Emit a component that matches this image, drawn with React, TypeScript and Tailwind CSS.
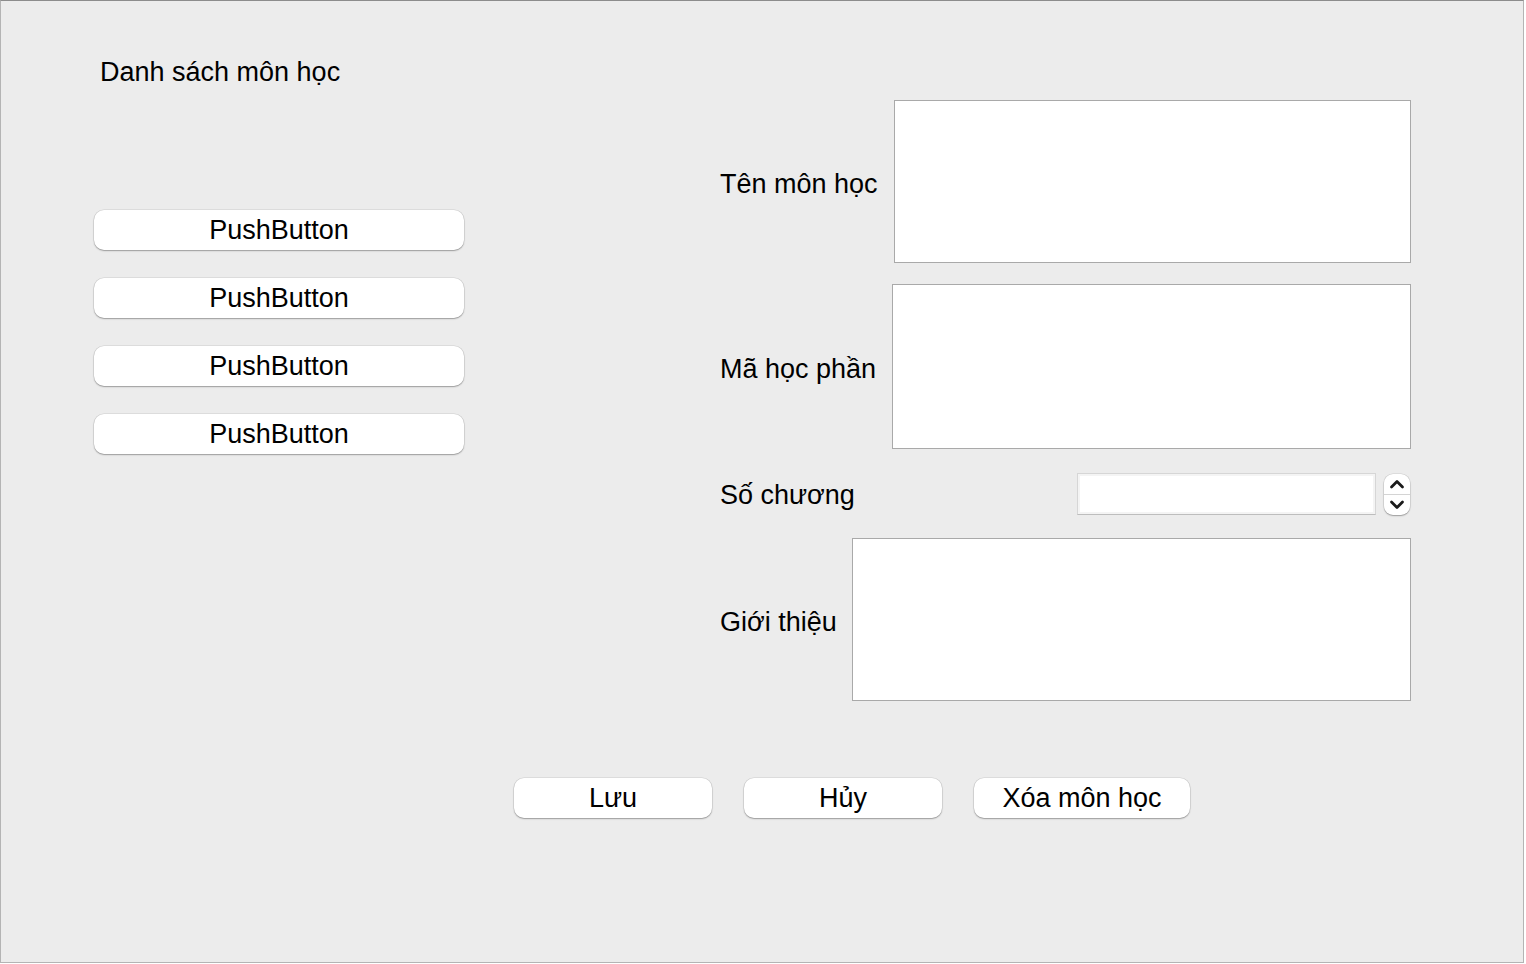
const sideButtons = ["PushButton", "PushButton", "PushButton", "PushButton"];

const fields = [
  { label: "Tên môn học", labelWidth: "w-[174px]", height: "h-[163px]" },
  { label: "Mã học phần", labelWidth: "w-[172px]", height: "h-[165px]" },
];

function MacButton({ text, className }: { text: string; className: string }) {
  return (
    <button
      className={`h-[40px] bg-white rounded-[10px] text-[27px] leading-none text-black shadow-[0_1px_1.5px_rgba(0,0,0,0.3),0_0_0_0.5px_rgba(0,0,0,0.12)] ${className}`}
    >
      {text}
    </button>
  );
}

function TextBox({ className }: { className: string }) {
  return <div className={`bg-white border border-[#a9a9a9] ${className}`} />;
}

function Stepper() {
  return (
    <div className="w-[26px] h-[41px] bg-white rounded-[9px] flex flex-col shadow-[0_1px_1.5px_rgba(0,0,0,0.3),0_0_0_0.5px_rgba(0,0,0,0.12)]">
      <div className="flex-1 flex items-center justify-center border-b border-[#d4d4d4]">
        <svg width="16" height="10" viewBox="0 0 16 10" fill="none">
          <polyline points="2.5,8 8,2.5 13.5,8" stroke="#1a1a1a" strokeWidth="2.8" strokeLinecap="round" strokeLinejoin="round" />
        </svg>
      </div>
      <div className="flex-1 flex items-center justify-center">
        <svg width="16" height="10" viewBox="0 0 16 10" fill="none">
          <polyline points="2.5,2 8,7.5 13.5,2" stroke="#1a1a1a" strokeWidth="2.8" strokeLinecap="round" strokeLinejoin="round" />
        </svg>
      </div>
    </div>
  );
}

export default function App() {
  return (
    <div
      className="w-[1524px] h-[963px] bg-[#ececec] border border-[#b4b4b4] border-t-[#8c8c8c] text-black"
      style={{ fontFamily: '"Liberation Sans", Arial, sans-serif' }}
    >
      <div className="flex">
        {/* left column */}
        <div className="ml-[93px] w-[370px] pt-[54px] flex flex-col">
          <div className="pl-[6px] h-[34px] leading-[34px] text-[27px]">Danh sách môn học</div>
          <div className="mt-[121px] flex flex-col gap-[28px]">
            {sideButtons.map((b, i) => (
              <MacButton key={i} text={b} className="w-full" />
            ))}
          </div>
        </div>

        {/* right column */}
        <div className="ml-[256px] w-[691px] pt-[99px] flex flex-col">
          {fields.map((f, i) => (
            <div key={i} className={`flex items-center ${i > 0 ? "mt-[21px]" : ""}`}>
              <div className={`${f.labelWidth} shrink-0 text-[27px] leading-none pt-[5px]`}>{f.label}</div>
              <TextBox className={`flex-1 ${f.height}`} />
            </div>
          ))}

          <div className="mt-[24px] h-[42px] flex items-center">
            <div className="text-[27px] leading-none pt-[2px]">Số chương</div>
            <div className="ml-auto w-[299px] h-[42px] bg-white border border-[#d6d6d6] border-b-[#bdbdbd] shadow-[inset_0_0_0_2px_#f4f4f4]" />
            <div className="ml-[8px] mr-[1px]">
              <Stepper />
            </div>
          </div>

          <div className="mt-[23px] flex items-center">
            <div className="w-[132px] shrink-0 text-[27px] leading-none pt-[5px]">Giới thiệu</div>
            <TextBox className="flex-1 h-[163px]" />
          </div>
        </div>
      </div>

      {/* bottom buttons */}
      <div className="mt-[77px] ml-[513px] flex gap-[32px]">
        <MacButton text="Lưu" className="w-[198px]" />
        <MacButton text="Hủy" className="w-[198px]" />
        <MacButton text="Xóa môn học" className="w-[216px]" />
      </div>
    </div>
  );
}
